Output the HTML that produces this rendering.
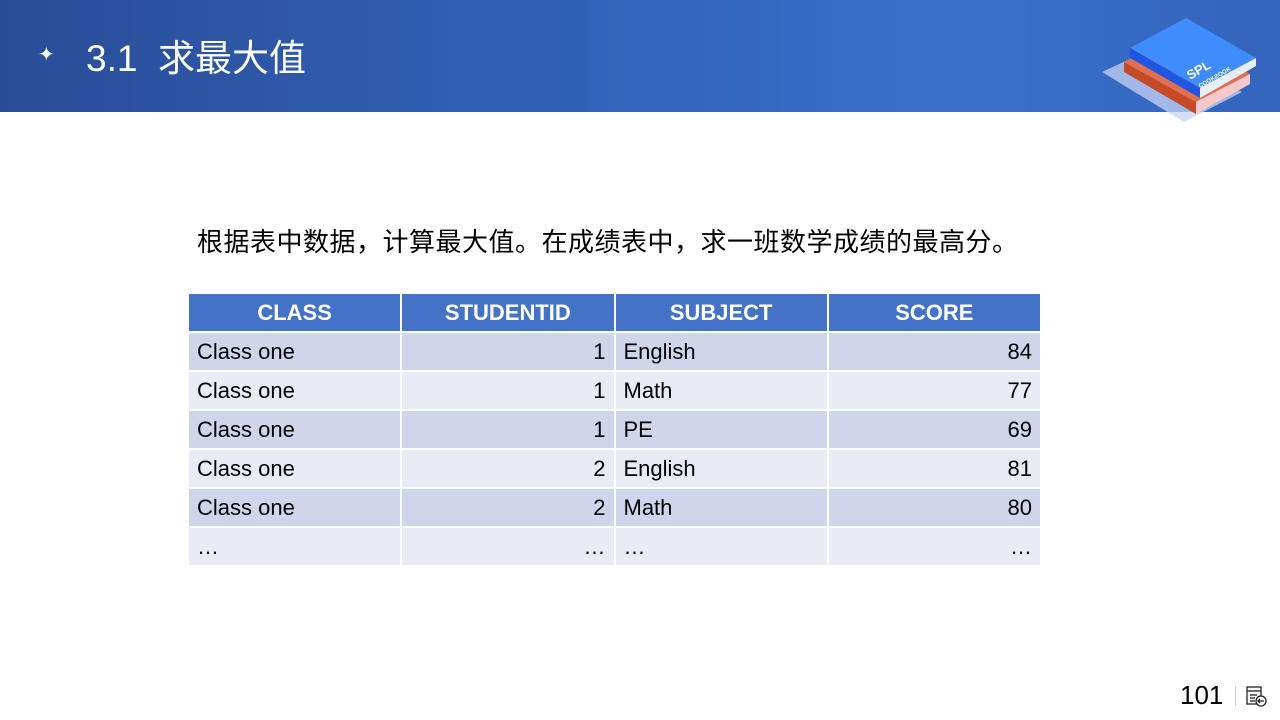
<!DOCTYPE html>
<html><head><meta charset="utf-8"><style>
body{margin:0;width:1280px;height:720px;overflow:hidden;background:#fff;font-family:"Liberation Sans","Noto Sans CJK SC",sans-serif;position:relative}
.hd{position:absolute;left:0;top:0;width:1280px;height:112px;background:linear-gradient(90deg,#2a4d98 0%,#3262b8 45%,#3a70cc 75%,#3464bc 100%)}
.t{position:absolute;left:86px;top:28px;color:#fff;font-size:37px}
.star{position:absolute;left:38px;top:42px;color:#fff;font-size:20px}
.p{position:absolute;left:197px;top:222px;font-size:26px;letter-spacing:0.5px;color:#000;white-space:nowrap}
table{position:absolute;left:187px;top:292px;border-collapse:collapse;table-layout:fixed;width:855px}
td{box-sizing:border-box;width:213px;height:39px;border:2px solid #fff;font-size:22px;padding:0 8px;color:#000;white-space:nowrap;overflow:hidden}
tr.h td{background:#4472c4;color:#fff;font-weight:bold;text-align:center;height:39px}
tr.a td{background:#cfd5ea}
tr.b td{background:#e9ebf5}
.r{text-align:right}
.pg{position:absolute;left:1180px;top:680px;font-size:26px}
</style></head><body>
<div class="hd"></div>
<div class="star">✦</div>
<div class="t">3.1&nbsp; 求最大值</div>
<svg style="position:absolute;left:1095px;top:15px" width="170" height="110" viewBox="1095 15 170 110">
<polygon points="1102,72 1160,45 1242,92 1184,122" fill="#c5d3f4" opacity="0.75"/>
<polygon points="1124,62 1180,34 1250,74 1196,102" fill="#e07050"/>
<polygon points="1124,62 1196,102 1196,114 1124,72" fill="#c44a2a"/>
<polygon points="1196,102 1250,74 1250,84 1196,114" fill="#f5c8cc"/>
<polygon points="1130,48 1186,18 1256,58 1200,88" fill="#3f8cff"/>
<polygon points="1130,48 1200,88 1200,98 1130,58" fill="#2255e0"/>
<polygon points="1200,88 1256,58 1256,66 1200,98" fill="#e8eefc"/>
<text x="1190" y="80" font-family="Liberation Sans" font-weight="bold" font-size="13" fill="#fff" transform="rotate(-30 1190 80)">SPL</text>
<text x="1200" y="88" font-family="Liberation Sans" font-weight="bold" font-size="6" fill="#fff" transform="rotate(-30 1200 88)">COOKBOOK</text>
</svg>
<div class="p">根据表中数据，计算最大值。在成绩表中，求一班数学成绩的最高分。</div>
<table>
<tr class="h"><td>CLASS</td><td>STUDENTID</td><td>SUBJECT</td><td>SCORE</td></tr>
<tr class="a"><td>Class one</td><td class="r">1</td><td>English</td><td class="r">84</td></tr>
<tr class="b"><td>Class one</td><td class="r">1</td><td>Math</td><td class="r">77</td></tr>
<tr class="a"><td>Class one</td><td class="r">1</td><td>PE</td><td class="r">69</td></tr>
<tr class="b"><td>Class one</td><td class="r">2</td><td>English</td><td class="r">81</td></tr>
<tr class="a"><td>Class one</td><td class="r">2</td><td>Math</td><td class="r">80</td></tr>
<tr class="b"><td>…</td><td class="r">…</td><td>…</td><td class="r">…</td></tr>
</table>
<div class="pg">101</div>
<div style="position:absolute;left:1235px;top:686px;width:1px;height:20px;background:#c8d4ec"></div>
<svg style="position:absolute;left:1246px;top:686px" width="22" height="22" viewBox="0 0 22 22" fill="none" stroke="#222" stroke-width="1.3">
<rect x="1" y="1" width="14" height="17"/><line x1="1" y1="5" x2="15" y2="5"/><line x1="4" y1="9" x2="11" y2="9"/><line x1="4" y1="12" x2="9" y2="12"/><line x1="4" y1="15" x2="9" y2="15"/>
<circle cx="15" cy="15" r="5" fill="#fff"/><path d="M18 15H12M14 13l-2 2 2 2"/>
</svg>
</body></html>
